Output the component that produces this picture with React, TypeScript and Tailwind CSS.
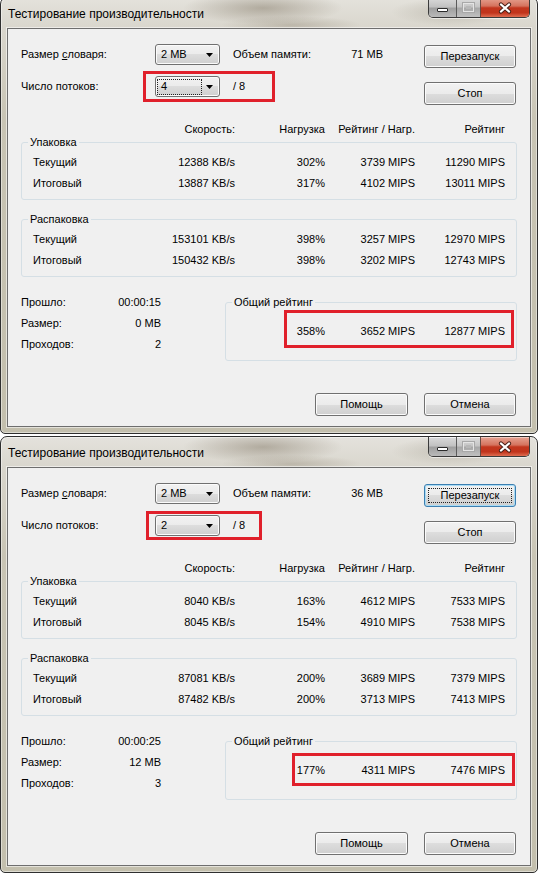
import React from "react";

type Row = { name: string; speed: string; usage: string; rpu: string; rating: string };

type Bench = {
  dict: string;
  mem: string;
  threads: string;
  comboFocus: boolean;
  restartFocus: boolean;
  pack: Row[];
  unpack: Row[];
  elapsed: string;
  size: string;
  passes: string;
  total: [string, string, string];
  threadMark: string;
  totalMark: string;
  offset: string;
};

const runs: Bench[] = [
  {
    dict: "2 MB",
    mem: "71 MB",
    threads: "4",
    comboFocus: true,
    restartFocus: false,
    pack: [
      { name: "Текущий", speed: "12388 KB/s", usage: "302%", rpu: "3739 MIPS", rating: "11290 MIPS" },
      { name: "Итоговый", speed: "13887 KB/s", usage: "317%", rpu: "4102 MIPS", rating: "13011 MIPS" },
    ],
    unpack: [
      { name: "Текущий", speed: "153101 KB/s", usage: "398%", rpu: "3257 MIPS", rating: "12970 MIPS" },
      { name: "Итоговый", speed: "150432 KB/s", usage: "398%", rpu: "3202 MIPS", rating: "12743 MIPS" },
    ],
    elapsed: "00:00:15",
    size: "0 MB",
    passes: "2",
    total: ["358%", "3652 MIPS", "12877 MIPS"],
    threadMark: "left-[135px] top-[42px] h-[31px] w-[132px]",
    totalMark: "left-[276px] top-[281px] h-[38px] w-[230px]",
    offset: "-mt-[3px]",
  },
  {
    dict: "2 MB",
    mem: "36 MB",
    threads: "2",
    comboFocus: false,
    restartFocus: true,
    pack: [
      { name: "Текущий", speed: "8040 KB/s", usage: "163%", rpu: "4612 MIPS", rating: "7533 MIPS" },
      { name: "Итоговый", speed: "8045 KB/s", usage: "154%", rpu: "4910 MIPS", rating: "7538 MIPS" },
    ],
    unpack: [
      { name: "Текущий", speed: "87081 KB/s", usage: "200%", rpu: "3689 MIPS", rating: "7379 MIPS" },
      { name: "Итоговый", speed: "87482 KB/s", usage: "200%", rpu: "3713 MIPS", rating: "7413 MIPS" },
    ],
    elapsed: "00:00:25",
    size: "12 MB",
    passes: "3",
    total: ["177%", "4311 MIPS", "7476 MIPS"],
    threadMark: "left-[138px] top-[43px] h-[29px] w-[116px]",
    totalMark: "left-[284px] top-[285px] h-[33px] w-[223px]",
    offset: "mt-[2px]",
  },
];

const btnFace =
  "bg-[linear-gradient(#f2f2f2_0%,#ebebeb_50%,#dddddd_50%,#cfcfcf_100%)]";

function Button({ label, focus = false, width }: { label: string; focus?: boolean; width: string }) {
  return (
    <div
      className={`relative flex h-[23px] ${width} items-center justify-center rounded-[3px] border ${btnFace} ${
        focus
          ? "border-[#3c7fb1] shadow-[inset_0_0_0_1px_#a9dcf5]"
          : "border-[#707070] shadow-[inset_0_0_0_1px_#fbfbfb]"
      }`}
    >
      {focus && <span className="absolute inset-[3px] border border-dotted border-[#222]" />}
      <span className="relative">{label}</span>
    </div>
  );
}

function Combo({ value, focus }: { value: string; focus: boolean }) {
  return (
    <div
      className={`relative flex h-[21px] w-[65px] items-center rounded-[3px] border border-[#707070] ${btnFace} shadow-[inset_0_0_0_1px_#fbfbfb]`}
    >
      <span
        className={`ml-[1px] flex h-[16px] w-[45px] items-center pl-[3px] ${
          focus ? "border border-dotted border-[#222]" : "border border-transparent"
        }`}
      >
        {value}
      </span>
      <svg className="absolute right-[6px] top-[8px]" width="7" height="4" viewBox="0 0 7 4">
        <path d="M0 0H7L3.5 4Z" fill="#000" />
      </svg>
    </div>
  );
}

function CaptionButtons() {
  return (
    <div className="mr-[1px] flex h-[20px] overflow-hidden rounded-b-[5px] border border-t-0 border-[#3b3b3b] shadow-[0_1px_0_rgba(255,255,255,0.55)]">
      <div className="flex w-[28px] items-end justify-center border-r border-[#5b5b5b] bg-[linear-gradient(#dadada,#c2c2c2_45%,#9f9f9f_55%,#bababa)] pb-[5px] shadow-[inset_0_1px_0_rgba(255,255,255,0.7)]">
        <span className="h-[4px] w-[11px] rounded-[1px] border border-[#2b2b2b] bg-white" />
      </div>
      <div className="flex w-[24px] items-center justify-center border-r border-[#6a4a42] bg-[linear-gradient(#dddddd,#c6c6c6_45%,#a8a8a8_55%,#c0c0c0)] shadow-[inset_0_1px_0_rgba(255,255,255,0.7)]">
        <span className="flex h-[9px] w-[11px] items-center justify-center border border-[#e4e4e4] shadow-[0_0_0_1px_#a8a8a8]">
          <span className="h-[3px] w-[5px] border border-[#b8b8b8]" />
        </span>
      </div>
      <div className="flex w-[48px] items-center justify-center bg-[linear-gradient(#e6a392,#d5735e_42%,#c2361e_52%,#c1341c_78%,#df6d51)] shadow-[inset_0_1px_0_rgba(255,255,255,0.45)]">
        <svg width="14" height="12" viewBox="0 0 14 12">
          <path d="M3 2.5L11 9.5M11 2.5L3 9.5" stroke="#4a2018" strokeWidth="4.2" strokeLinecap="round" />
          <path d="M3 2.5L11 9.5M11 2.5L3 9.5" stroke="#ffffff" strokeWidth="2.3" strokeLinecap="round" />
        </svg>
      </div>
    </div>
  );
}

function DataRow({ row }: { row: Row }) {
  return (
    <div className="grid h-[21px] grid-cols-[122px_80px_90px_90px_90px] items-center pl-[11px]">
      <span>{row.name}</span>
      <span className="text-right">{row.speed}</span>
      <span className="text-right">{row.usage}</span>
      <span className="text-right">{row.rpu}</span>
      <span className="text-right">{row.rating}</span>
    </div>
  );
}

function Group({ title, rows, className = "" }: { title: string; rows: Row[]; className?: string }) {
  return (
    <fieldset className={`rounded-[3px] border border-[#d5dfe5] pb-[5px] ${className}`}>
      <legend className="ml-[6px] px-[2px] leading-[13px]">{title}</legend>
      <div className="pt-[3px]">
        {rows.map((r) => (
          <DataRow key={r.name} row={r} />
        ))}
      </div>
    </fieldset>
  );
}

function BenchWindow({ run }: { run: Bench }) {
  const stats: [string, string][] = [
    ["Прошло:", run.elapsed],
    ["Размер:", run.size],
    ["Проходов:", run.passes],
  ];
  return (
    <div
      className={`${run.offset} flex h-[437px] w-[538px] flex-col rounded-t-[7px] rounded-b-[5px] border border-[#2f2f2f] px-[6px] pb-[6px] shadow-[inset_0_0_0_1px_rgba(255,255,255,0.45)] [background:radial-gradient(ellipse_80px_16px_at_262px_10px,rgba(112,100,80,0.42),transparent),radial-gradient(ellipse_70px_9px_at_290px_27px,rgba(120,108,86,0.3),transparent),radial-gradient(ellipse_60px_14px_at_450px_14px,rgba(120,112,92,0.25),transparent),linear-gradient(180deg,#e4e2dc_0px,#d9d6cd_30px,#c8c4b4_120px,#c3bfad_100%)]`}
    >
      {/* title bar */}
      <div className="flex h-[30px] items-start justify-between">
        <span className="pl-[1px] pt-[9px] text-[12px] leading-[15px] text-black">
          Тестирование производительности
        </span>
        <CaptionButtons />
      </div>

      {/* client area */}
      <div className="relative h-[399px] border border-[#6e6e6e] bg-[#f0f0f0] px-[13px] pt-[15px] shadow-[0_0_0_1px_rgba(255,255,255,0.55)]">
        <div className="flex">
          <div className="flex flex-col gap-[11px]">
            <div className="flex h-[21px] items-center">
              <span className="w-[134px]">
                Размер <span className="underline underline-offset-[1px]">с</span>ловаря:
              </span>
              <Combo value={run.dict} focus={false} />
              <div className="ml-[13px] flex w-[150px] justify-between">
                <span>Объем памяти:</span>
                <span>{run.mem}</span>
              </div>
            </div>
            <div className="flex h-[21px] items-center">
              <span className="w-[134px]">Число потоков:</span>
              <Combo value={run.threads} focus={run.comboFocus} />
              <span className="ml-[13px]">/ 8</span>
            </div>
          </div>
          <div className="ml-auto mr-[1px] mt-[1px] flex flex-col gap-[14px]">
            <Button label="Перезапуск" focus={run.restartFocus} width="w-[92px]" />
            <Button label="Стоп" width="w-[92px]" />
          </div>
        </div>

        <div className="mt-[18px] grid h-[13px] grid-cols-[134px_80px_90px_90px_90px] leading-[13px]">
          <span />
          <span className="text-right">Скорость:</span>
          <span className="text-right">Нагрузка</span>
          <span className="text-right">Рейтинг / Нагр.</span>
          <span className="text-right">Рейтинг</span>
        </div>

        <Group title="Упаковка" rows={run.pack} />
        <Group title="Распаковка" rows={run.unpack} className="mt-[13px]" />

        <div className="mt-[15px] flex">
          <div className="w-[204px]">
            {stats.map(([k, v]) => (
              <div key={k} className="flex h-[21px] w-[140px] items-center justify-between">
                <span>{k}</span>
                <span>{v}</span>
              </div>
            ))}
          </div>
          <fieldset className="mt-[4px] w-[292px] rounded-[3px] border border-[#d5dfe5] pb-[18px]">
            <legend className="ml-[6px] px-[2px] leading-[13px]">Общий рейтинг</legend>
            <div className="mt-[12px] grid h-[21px] grid-cols-[9px_90px_90px_90px] items-center">
              <span />
              <span className="text-right">{run.total[0]}</span>
              <span className="text-right">{run.total[1]}</span>
              <span className="text-right">{run.total[2]}</span>
            </div>
          </fieldset>
        </div>

        <div className="mt-[32px] flex justify-end gap-[16px] pr-[1px]">
          <Button label="Помощь" width="w-[93px]" />
          <Button label="Отмена" width="w-[92px]" />
        </div>

        {/* red highlight frames */}
        <div className={`pointer-events-none absolute border-[3px] border-[#e0202b] ${run.threadMark}`} />
        <div className={`pointer-events-none absolute border-[3px] border-[#e0202b] ${run.totalMark}`} />
      </div>
    </div>
  );
}

export default function App() {
  return (
    <div className="h-[873px] w-[538px] overflow-hidden bg-white font-['Liberation_Sans',Arial,sans-serif] text-[11px] text-black">
      {runs.map((r, i) => (
        <BenchWindow key={i} run={r} />
      ))}
    </div>
  );
}
